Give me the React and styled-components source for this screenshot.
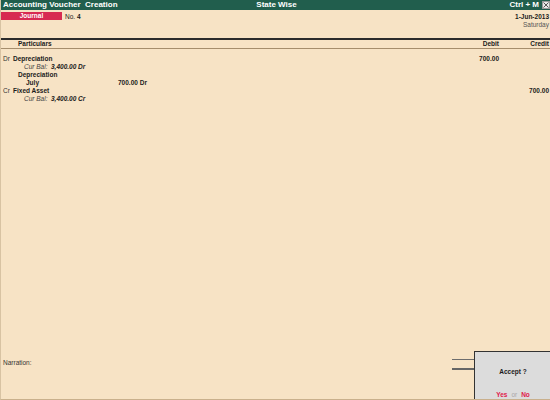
import styled, { createGlobalStyle } from "styled-components";

const GlobalStyle = createGlobalStyle`
    body {
        margin: 0;
        background: #f7e3c5;
        font-family: "Liberation Sans", Arial, sans-serif;
    }
`

const Window = styled.div`
    position: relative;
    width: 550px;
    height: 400px;
    background: #f7e3c5;
    display: flex;
    flex-direction: column;
    overflow: hidden;
    box-sizing: border-box;
    border-left: 1px solid #d8c3a3;
    border-bottom: 1px solid #c9b08c;
    color: #1b1b1b;
`

const TitleBar = styled.div`
    height: 10px;
    background: #215e4d;
    color: #ffffff;
    font-size: 8px;
    font-weight: bold;
    display: grid;
    grid-template-columns: 1fr auto 1fr;
    align-items: center;
    padding-left: 2px;
    line-height: 10px;
`

const TitleRight = styled.div`
    display: flex;
    justify-content: flex-end;
    align-items: center;
    gap: 3px;
`

const CloseBox = styled.div`
    width: 8px;
    height: 8px;
    background: #e8e8e8;
    border: 1px solid #9a9a9a;
    box-sizing: border-box;
    display: flex;
`

const HeadRow = styled.div`
    display: flex;
    justify-content: space-between;
    align-items: flex-start;
    padding-top: 2px;
    height: 26px;
`

const VoucherType = styled.div`
    display: flex;
    align-items: center;
    gap: 3px;
    font-size: 6.5px;
`

const Badge = styled.div`
    width: 61px;
    height: 8px;
    background: #d72a51;
    color: #fff;
    font-weight: bold;
    font-size: 6.5px;
    line-height: 8px;
    text-align: center;
`

const DateBlock = styled.div`
    text-align: right;
    font-size: 6.5px;
    line-height: 8px;
    padding-top: 1px;
    padding-right: 1px;
`

const Bold = styled.span`
    font-weight: bold;
`

const Muted = styled.div`
    color: #555;
`

const ColumnHead = styled.div`
    display: grid;
    grid-template-columns: 1fr 50px 50px;
    border-top: 2px solid #2b2b2b;
    border-bottom: 1px solid #a58d6c;
    font-size: 6.5px;
    font-weight: bold;
    line-height: 8px;
    padding: 0 1px 0 17px;
    & > div + div {
        text-align: right;
    }
`

const Entries = styled.div`
    padding-top: 6px;
    font-size: 6.5px;
    line-height: 8px;
`

const Row = styled.div`
    display: grid;
    grid-template-columns: 12px 1fr 50px 50px;
    padding-right: 1px;
    & > div:nth-child(3), & > div:nth-child(4) {
        text-align: right;
        font-weight: bold;
    }
`

const Side = styled.div`
    padding-left: 2px;
    color: #333;
`

const Indent = styled.div`
    padding-left: ${p => p.offset}px;
    font-weight: ${p => (p.bold ? "bold" : "normal")};
    display: flex;
`

const Label = styled.span`
    font-style: italic;
    color: #444;
    width: 27px;
`

const Amount = styled.span`
    font-weight: bold;
    font-style: ${p => (p.italic ? "italic" : "normal")};
`

const AllocName = styled.span`
    width: 92px;
`

const Filler = styled.div`
    flex: 1;
`

const Footer = styled.div`
    height: 60px;
    font-size: 6.5px;
    color: #333;
    padding-left: 2px;
`

const Narration = styled.div`
    margin-top: 20px;
`

const TotalLines = styled.div`
    position: absolute;
    left: 451px;
    top: 359px;
    width: 22px;
    display: flex;
    flex-direction: column;
    gap: 8px;
`

const TotalLine = styled.div`
    border-top: ${p => p.thick ? "2px solid #666" : "1px solid #6d6d6d"};
`

const Dialog = styled.div`
    position: absolute;
    left: 473px;
    top: 351px;
    width: 77px;
    height: 49px;
    box-sizing: border-box;
    background: #dcdcdc;
    border: 1px solid #333;
    border-right: none;
    display: flex;
    flex-direction: column;
    align-items: center;
    font-size: 6.5px;
    font-weight: bold;
`

const Question = styled.div`
    margin-top: 16px;
    flex: 1;
`

const Choices = styled.div`
    display: flex;
    gap: 4px;
    padding-bottom: 1px;
`

const Choice = styled.span`
    color: ${p => (p.muted ? "#a8a8a8" : "#e0204a")};
    font-weight: ${p => (p.muted ? "normal" : "bold")};
`

const App = () => {
    return (
        <Window>
            <GlobalStyle />
            <TitleBar>
                <div>Accounting Voucher&nbsp; Creation</div>
                <div>State Wise</div>
                <TitleRight>
                    <span>Ctrl + M</span>
                    <CloseBox>
                        <svg width="6" height="6" viewBox="0 0 6 6">
                            <path d="M0.5 0.5 L5.5 5.5 M5.5 0.5 L0.5 5.5" stroke="#555" strokeWidth="1" />
                        </svg>
                    </CloseBox>
                </TitleRight>
            </TitleBar>
            <HeadRow>
                <VoucherType>
                    <Badge>Journal</Badge>
                    <span>No. <Bold>4</Bold></span>
                </VoucherType>
                <DateBlock>
                    <Bold>1-Jun-2013</Bold>
                    <Muted>Saturday</Muted>
                </DateBlock>
            </HeadRow>
            <ColumnHead>
                <div>Particulars</div>
                <div>Debit</div>
                <div>Credit</div>
            </ColumnHead>
            <Entries>
                <Row>
                    <Side>Dr</Side>
                    <Indent offset={0} bold>Depreciation</Indent>
                    <div>700.00</div>
                    <div></div>
                </Row>
                <Row>
                    <div></div>
                    <Indent offset={11}><Label>Cur Bal:</Label><Amount italic>3,400.00 Dr</Amount></Indent>
                    <div></div>
                    <div></div>
                </Row>
                <Row>
                    <div></div>
                    <Indent offset={5} bold>Depreciation</Indent>
                    <div></div>
                    <div></div>
                </Row>
                <Row>
                    <div></div>
                    <Indent offset={13} bold><AllocName>July</AllocName><span>700.00 Dr</span></Indent>
                    <div></div>
                    <div></div>
                </Row>
                <Row>
                    <Side>Cr</Side>
                    <Indent offset={0} bold>Fixed Asset</Indent>
                    <div></div>
                    <div>700.00</div>
                </Row>
                <Row>
                    <div></div>
                    <Indent offset={11}><Label>Cur Bal:</Label><Amount italic>3,400.00 Cr</Amount></Indent>
                    <div></div>
                    <div></div>
                </Row>
            </Entries>
            <Filler />
            <Footer>
                <Narration>Narration:</Narration>
            </Footer>
            <TotalLines>
                <TotalLine />
                <TotalLine thick />
            </TotalLines>
            <Dialog>
                <Question>Accept ?</Question>
                <Choices>
                    <Choice>Yes</Choice>
                    <Choice muted>or</Choice>
                    <Choice>No</Choice>
                </Choices>
            </Dialog>
        </Window>
    )
}

export default App
